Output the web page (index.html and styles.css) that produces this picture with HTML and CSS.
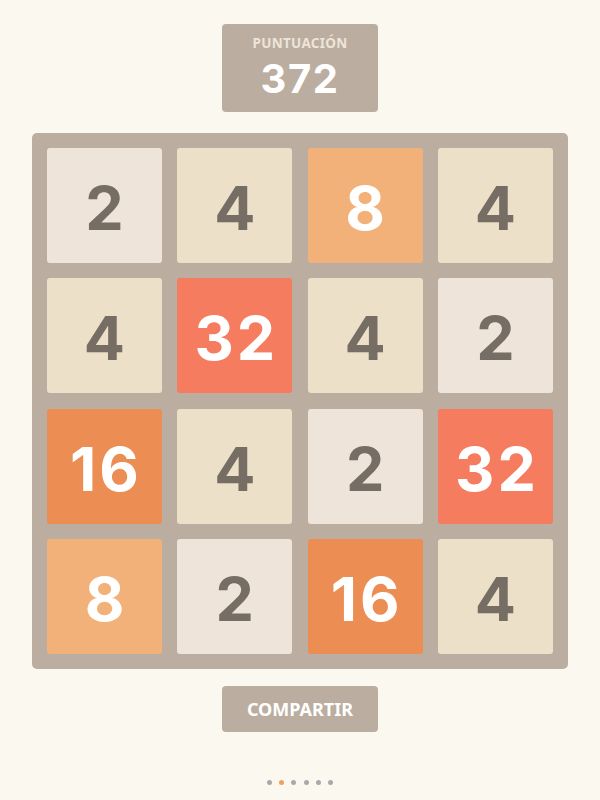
FILE: index.html
```html
<!DOCTYPE html>
<html lang="es">
<head>
    <meta charset="UTF-8" />
    <meta name="viewport" content="width=device-width, initial-scale=1.0"/>
    <title>2048</title>
    <link rel="stylesheet" href="styles.css">
</head>
<body>

<div class="game">
    <div class="score">
        <div class="score-label">PUNTUACIÓN</div>
        <div class="score-value">372</div>
    </div>

    <div class="board">
        <div class="tile t2">2</div>
        <div class="tile t4">4</div>
        <div class="tile t8">8</div>
        <div class="tile t4">4</div>

        <div class="tile t4">4</div>
        <div class="tile t32">32</div>
        <div class="tile t4">4</div>
        <div class="tile t2">2</div>

        <div class="tile t16">16</div>
        <div class="tile t4">4</div>
        <div class="tile t2">2</div>
        <div class="tile t32">32</div>

        <div class="tile t8">8</div>
        <div class="tile t2">2</div>
        <div class="tile t16">16</div>
        <div class="tile t4">4</div>
    </div>

    <button class="share">COMPARTIR</button>

    <div class="pager">
        <span class="dot"></span>
        <span class="dot active"></span>
        <span class="dot"></span>
        <span class="dot"></span>
        <span class="dot"></span>
        <span class="dot"></span>
    </div>
</div>

</body>
</html>
```

FILE: styles.css
```css
html, body {
    margin: 0;
    height: 100%;
}
body {
    background: #faf8ef;
    font-family: Inter, "Noto Sans", sans-serif;
    font-weight: bold;
}
.game {
    display: flex;
    flex-direction: column;
    align-items: center;
    padding-top: 24px;
}
.score {
    width: 156px;
    height: 88px;
    box-sizing: border-box;
    background: #bbada0;
    border-radius: 4px;
    display: flex;
    flex-direction: column;
    align-items: center;
    padding-top: 10px;
}
.score-label {
    color: #eee4da;
    font-family: "Noto Sans", sans-serif;
    font-size: 13.5px;
    line-height: 18px;
    letter-spacing: 0.3px;
}
.score-value {
    color: #ffffff;
    font-size: 40px;
    line-height: 46px;
    letter-spacing: 1.5px;
    margin-top: 4px;
}
.board {
    margin-top: 21px;
    width: 536px;
    height: 536px;
    box-sizing: border-box;
    padding: 15px;
    background: #bbada0;
    border-radius: 5px;
    display: grid;
    grid-template-columns: repeat(4, 1fr);
    grid-template-rows: repeat(4, 1fr);
    gap: 15.33px;
}
.tile {
    border-radius: 3px;
    display: flex;
    align-items: center;
    justify-content: center;
    padding-top: 5px;
    font-size: 61px;
    letter-spacing: 3px;
    text-indent: 3px;
    color: #766d64;
}
.t2 { background: #eee4da; }
.t4 { background: #ede0c8; }
.t8 { background: #f2b179; color: #ffffff; }
.t16 { background: #ec8d54; color: #ffffff; }
.t32 { background: #f57c5f; color: #ffffff; }

.share {
    margin-top: 17px;
    width: 156px;
    height: 46px;
    border: none;
    border-radius: 4px;
    background: #bbada0;
    color: #ffffff;
    font-family: "Noto Sans", sans-serif;
    font-weight: bold;
    font-size: 18px;
}
.pager {
    display: flex;
    gap: 7.4px;
    margin-top: 48px;
}
.dot {
    width: 5px;
    height: 5px;
    border-radius: 50%;
    background: #a9a9a9;
}
.dot.active {
    background: #f0a05f;
}
```
